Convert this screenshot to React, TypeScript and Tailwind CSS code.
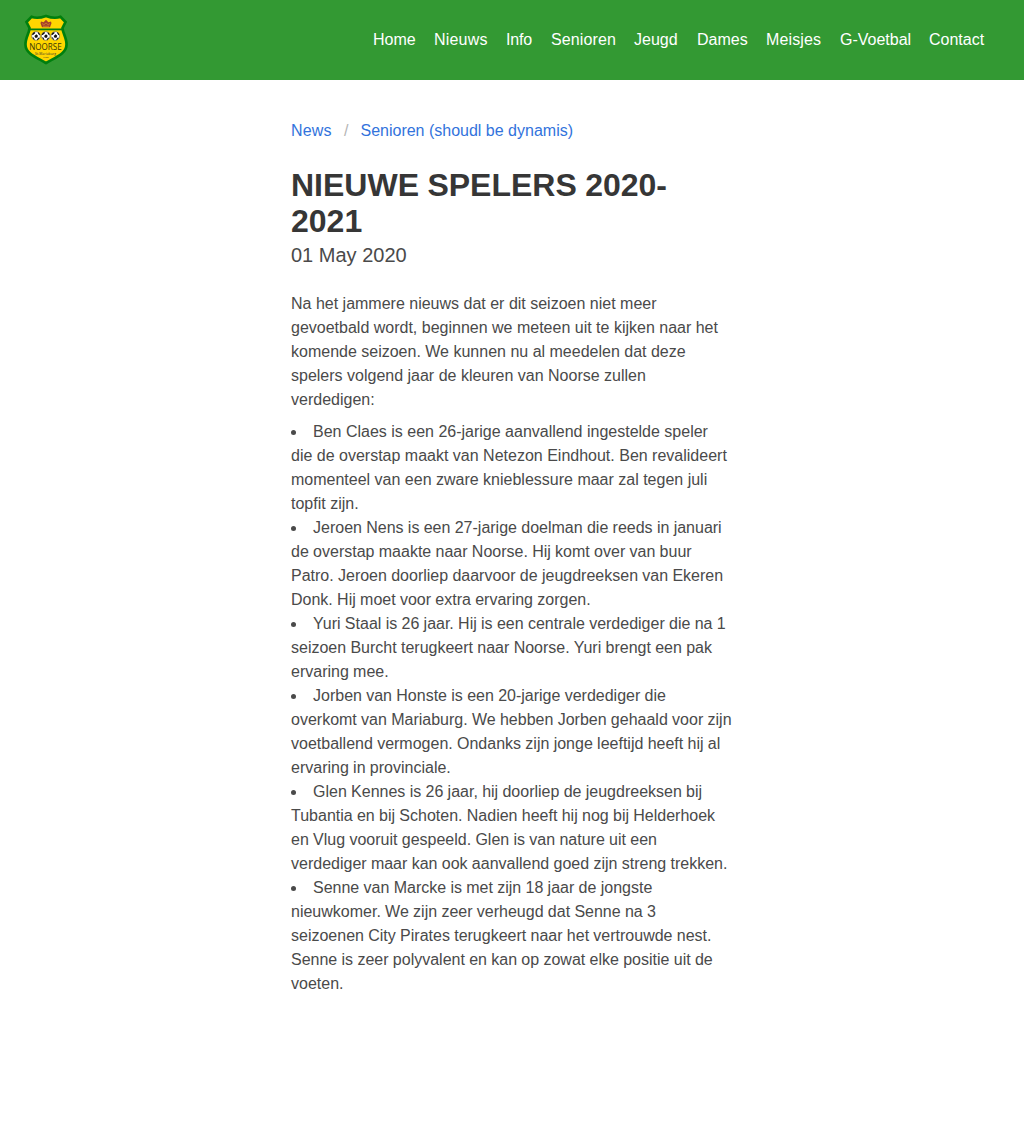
const nav: [string, string][] = [
  ["Home", "w-[43px]"], ["Nieuws", "w-[54px] tracking-[0.2px]"], ["Info", "w-[27px] tracking-[-0.15px]"], ["Senioren", "w-[65px] tracking-[0.12px]"], ["Jeugd", "w-[45px]"],
  ["Dames", "w-[51px]"], ["Meisjes", "w-[56px] tracking-[0.12px]"], ["G-Voetbal", "w-[71px]"], ["Contact", "w-[55px]"],
];
const players = [
  "Ben Claes is een 26-jarige aanvallend ingestelde speler die de overstap maakt van Netezon Eindhout. Ben revalideert momenteel van een zware knieblessure maar zal tegen juli topfit zijn.",
  "Jeroen Nens is een 27-jarige doelman die reeds in januari de overstap maakte naar Noorse. Hij komt over van buur Patro. Jeroen doorliep daarvoor de jeugdreeksen van Ekeren Donk. Hij moet voor extra ervaring zorgen.",
  "Yuri Staal is 26 jaar. Hij is een centrale verdediger die na 1 seizoen Burcht terugkeert naar Noorse. Yuri brengt een pak ervaring mee.",
  "Jorben van Honste is een 20-jarige verdediger die overkomt van Mariaburg. We hebben Jorben gehaald voor zijn voetballend vermogen. Ondanks zijn jonge leeftijd heeft hij al ervaring in provinciale.",
  "Glen Kennes is 26 jaar, hij doorliep de jeugdreeksen bij Tubantia en bij Schoten. Nadien heeft hij nog bij Helderhoek en Vlug vooruit gespeeld. Glen is van nature uit een verdediger maar kan ook aanvallend goed zijn streng trekken.",
  "Senne van Marcke is met zijn 18 jaar de jongste nieuwkomer. We zijn zeer verheugd dat Senne na 3 seizoenen City Pirates terugkeert naar het vertrouwde nest. Senne is zeer polyvalent en kan op zowat elke positie uit de voeten.",
];

function Ball({ x }: { x: number }) {
  return (
    <g transform={`translate(${x} 22)`}>
      <circle r="4.300" fill="#fff" stroke="#444" strokeWidth=".5" />
      <path d="M.3-1.800 2-.3 1.200 1.700h-2L-1.600 0ZM-4-1l1-2.300 2-.8.2 1.300-2.100 1.900ZM4.100-.8l-.8-2.200-1.500-1 .1 1.300 1.200 1.600ZM-3.800 1.300l1.500.2 1 2-.6.600ZM3.700 1.800l-1.500 0-1.300 2 .7.400Z" fill="#111" />
    </g>
  );
}

function Crest() {
  return (
    <svg viewBox="0 0 46 52" className="h-[52px] w-[46px]">
      <path d="M8.500 2.800C13 4.500 18 3.800 23 2 28 3.800 33 4.500 37.500 2.800L42.500 8 39.500 14C39.500 19 44 24 43.500 31 43.200 40 32 43.500 23 49 14 43.500 2.800 40 2.500 31 2 24 6.500 19 6.500 14L3.500 8Z" fill="#ffd600" stroke="#007f0e" strokeWidth="2.700" />
      <path d="M7 15.400H39" stroke="#007f0e" strokeWidth="1.800" />
      <path d="m18 7.500 2.600.8L23 5.800l2.400 2.500 2.600-.8.500 1.800-1.500 4h-8l-1.500-4Z" fill="#a5412a" />
      <path d="m19 9.500 1.800 1.300L23 9l2.200 1.800L27 9.500M20 12.300h6" fill="none" stroke="#e0a030" strokeWidth=".6" />
      <Ball x={13} /><Ball x={22.7} /><Ball x={32.3} />
      <text x="22.400" y="35.700" textAnchor="middle" fontSize="9.300" textLength="32.500" lengthAdjust="spacingAndGlyphs" fontFamily="Open Sans, sans-serif" fill="#383508">NOORSE</text>
      <text x="22.500" y="41" textAnchor="middle" fontSize="3.300" textLength="21" fontFamily="Open Sans, sans-serif" fill="#333">St-Mariaburg</text>
      <text x="22.500" y="43.700" textAnchor="middle" fontSize="2.500" fontFamily="Open Sans, sans-serif" fill="#333">1928</text>
    </svg>
  );
}

export default function App() {
  return (
    <div className="min-h-[1132px] bg-white font-['Liberation_Sans',sans-serif] text-base text-[#4a4a4a] [text-rendering:optimizeLegibility]">
      <header className="flex h-20 items-center justify-between bg-[#339933] pl-[23px] pr-10 text-white">
        <Crest />
        <nav className="flex gap-[18px]">
          {nav.map(([label, width]) => <a key={label} className={`${width} whitespace-nowrap`}>{label}</a>)}
        </nav>
      </header>
      <main className="mx-auto w-[442px] pt-[39px]">
        <nav className="flex text-[#3273dc]">
          <a className="w-[41px] tracking-[0.2px]">News</a><span className="px-3 text-[#b5b5b5]">/</span><a>Senioren (shoudl be dynamis)</a>
        </nav>
        <h1 className="mt-6 text-[32px] leading-9 font-bold text-[#363636] [word-spacing:-0.5px]">NIEUWE SPELERS 2020-2021</h1>
        <p className="mt-1 text-xl leading-[25px]">01 May 2020</p>
        <p className="mt-6">Na het jammere nieuws dat er dit seizoen niet meer gevoetbald wordt, beginnen we meteen uit te kijken naar het komende seizoen. We kunnen nu al meedelen dat deze spelers volgend jaar de kleuren van Noorse zullen verdedigen:</p>
        <ul className="mt-2 list-inside list-disc">
          {players.map((text) => <li key={text} className="not-first:[word-spacing:-0.15px]">{text}</li>)}
        </ul>
      </main>
    </div>
  );
}
